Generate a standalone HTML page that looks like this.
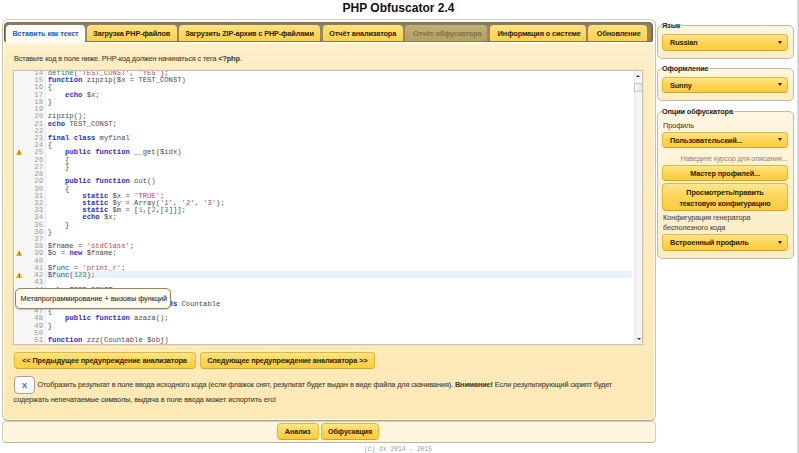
<!DOCTYPE html>
<html><head><meta charset="utf-8">
<style>
*{box-sizing:border-box;margin:0;padding:0}
html,body{width:799px;height:453px;overflow:hidden;background:#fff}
body{position:relative;font-family:"Liberation Sans",sans-serif;font-size:7.3px;letter-spacing:-0.12px;color:#443e30}
.abs{position:absolute}
#title{left:0;width:797px;top:1px;letter-spacing:0;text-align:center;font-weight:bold;font-size:12px;line-height:14px;color:#111}
#rline{left:797px;top:0;width:2px;height:453px;background:linear-gradient(90deg,#eceef3,#b9bdc9)}
#main{left:2px;top:19px;width:653.5px;height:402px;border:1px solid #d3cec0;border-left-color:#c9c2a6;border-right-color:#c9c2a6;border-bottom-color:#b2a684;box-shadow:inset 0 0 0 1px #fffbf0;border-radius:6px;background:linear-gradient(#fffaf0 0,#fffcf2 22.5px,#fdf0cc 24.5px,#fdedc3 45px,#fde9b6 100%)}
#tabbar{left:4px;top:22px;width:649px;height:20px;border-radius:5px 5px 3px 3px;background:linear-gradient(#7d7463 0,#918466 20%,#9a8a5e 80%,#8a7945 100%);box-shadow:inset 1px 0 #5f5646,inset -1.5px 0 #6a604c}
.tab{position:absolute;top:24.5px;height:16.5px;border-radius:4px 4px 0 0;background:linear-gradient(#fde27e,#fbd04a);font-weight:bold;color:#2e2200;text-align:center;line-height:17px;white-space:nowrap}
.tab.act{background:linear-gradient(#ffffff,#fffaf0);color:#1f60b5;height:17.5px}
.tab.dis{background:linear-gradient(#bfb072,#b1a163);color:#7f7148}
.th1{-webkit-text-stroke:0.1px currentColor}
#desc{left:14px;top:54px;line-height:10px;white-space:nowrap}
#editor{left:13px;top:69.5px;width:630px;height:275px;border:1px solid #cdc4a6;box-shadow:0 0 0 0.6px #e6dcc0;background:#fff;overflow:hidden}
#gutter{position:absolute;left:1px;top:0;width:31px;height:100%;background:#f6f6f6;border-right:1px solid #ececec}
#code{position:absolute;letter-spacing:0;left:0;top:-0.5px;width:620px;font-family:"Liberation Mono",monospace;font-size:7.2px;line-height:7.22px;white-space:pre;color:#4a4a4a}
.ln{display:inline-block;width:30px;text-align:right;color:#9a9a9a;padding-right:1px}
.sp{display:inline-block;width:3.8px}
.row{height:7.22px;position:relative}
.k{color:#2b2bd6;font-weight:bold}
.f{color:#0a7f8a}
.s{color:#c9404e}
.n{color:#2a9a60}
.hl:before{content:"";position:absolute;left:32px;right:2px;top:-1px;bottom:1px;background:#eaf2fd;z-index:-1}
.row{z-index:0}
.warn{position:absolute;left:2px;top:-0.5px;width:0;height:0;border-left:3px solid transparent;border-right:3px solid transparent;border-bottom:6px solid #eeb000}
.warn:after{content:"";position:absolute;left:-0.5px;top:2px;width:1px;height:3px;background:#7a5a00}
#sb{position:absolute;left:620px;top:0;width:8.5px;height:100%;background:linear-gradient(90deg,#ececec,#f7f7f7 40%,#f2f2f2)}
#sb .up{position:absolute;left:2.2px;top:4.5px;border-left:2px solid transparent;border-right:2px solid transparent;border-bottom:2.5px solid #333}
#sb .dn{position:absolute;left:2.5px;bottom:4px;border-left:2px solid transparent;border-right:2px solid transparent;border-top:2.5px solid #333}
#sb .th{position:absolute;left:0;top:12.5px;width:8.5px;height:8.5px;border:1px solid #c4c4c4;background:linear-gradient(90deg,#f8f8f8,#e2e2e2)}
.btn{position:absolute;border:1.2px solid #e2b834;border-bottom-color:#d4a52a;border-radius:4px;background:linear-gradient(#fde690,#fcd456 50%,#fbcc3e);font-weight:bold;color:#2e2200;text-align:center;white-space:nowrap}
#chk{left:13.5px;top:376px;width:21.5px;height:17.5px;border:1.2px solid #aaa18a;border-radius:4px;background:linear-gradient(#fff,#f3f6fb);color:#2b6db5;font-weight:bold;font-size:8px;text-align:center;line-height:18px}
#opt1{left:37.5px;top:380px;line-height:10px;white-space:nowrap;letter-spacing:-0.11px}
#opt2{left:13.5px;top:395px;line-height:10px;white-space:nowrap;letter-spacing:-0.08px}
#bottom{left:2px;top:421px;width:653.5px;height:22px;border:1px solid #d6cdb4;border-bottom-color:#c0b596;border-radius:4px;background:#fef5de}
#foot{left:364px;top:445.5px;letter-spacing:0;font-family:"Liberation Mono",monospace;font-size:6.3px;line-height:8px;color:#9a9a9a;white-space:pre}
.fs{position:absolute;left:657px;width:136.5px;border:1px solid #c6bb9c;border-radius:5px;background:linear-gradient(#fef6e2,#fdedc4)}
.lg{position:absolute;left:662px;font-weight:bold;color:#262218;line-height:9px;background:linear-gradient(transparent 45%,#fef5de 45%);padding-right:1px}
.sel{position:absolute;left:662px;width:126px;height:16.5px;border:1.2px solid #e2b834;border-bottom-color:#d4a52a;border-radius:4px;background:linear-gradient(#fde690,#fcd456 50%,#fbcc3e);font-weight:bold;color:#2e2200;line-height:15px;padding-left:7px;white-space:nowrap}
.sel:after{content:"";position:absolute;right:5.5px;top:5.5px;border-left:2.5px solid transparent;border-right:2.5px solid transparent;border-top:3px solid #2e2200}
.lbl{position:absolute;left:663px;color:#514a3b;letter-spacing:-0.07px;line-height:10px;white-space:nowrap}
#tip{letter-spacing:-0.02px;left:14.5px;top:288px;width:156px;height:20.5px;border:1.3px solid #8f8468;border-radius:5px;background:#fef9ea;color:#333;line-height:19px;padding-left:5px;white-space:nowrap;box-shadow:0 1px 1.5px rgba(60,50,20,0.25)}
</style></head><body>
<div id="title" class="abs">PHP Obfuscator 2.4</div>
<div id="rline" class="abs"></div>

<div id="main" class="abs"></div>
<div id="tabbar" class="abs"></div>
<div class="tab act" style="left:6px;width:79px">Вставить как текст</div>
<div class="tab" style="left:86.5px;width:90.5px">Загрузка PHP-файлов</div>
<div class="tab" style="left:179px;width:141px">Загрузить ZIP-архив с PHP-файлами</div>
<div class="tab" style="left:322.5px;width:80.5px">Отчёт анализатора</div>
<div class="tab dis" style="left:405px;width:82px;padding-left:2.5px">Отчёт обфускатора</div>
<div class="tab" style="left:489.5px;width:96.5px;padding-left:3px">Информация о системе</div>
<div class="tab" style="left:588px;width:59px;padding-left:2.5px">Обновление</div>

<div id="desc" class="abs th1">Вставьте код в поле ниже. PHP-код должен начинаться с тега <b>&lt;?php</b>.</div>

<div id="editor" class="abs">
<div id="gutter"></div>
<div id="code"><div class="row"><span class="ln">14</span><span class="sp"></span><span class="f">define</span>(<span class="s">'TEST_CONST'</span>, <span class="s">'YES'</span>);</div><div class="row"><span class="ln">15</span><span class="sp"></span><span class="k">function</span> zipzip($x = TEST_CONST)</div><div class="row"><span class="ln">16</span><span class="sp"></span>{</div><div class="row"><span class="ln">17</span><span class="sp"></span>    <span class="k">echo</span> $x;</div><div class="row"><span class="ln">18</span><span class="sp"></span>}</div><div class="row"><span class="ln">19</span><span class="sp"></span></div><div class="row"><span class="ln">20</span><span class="sp"></span>zipzip();</div><div class="row"><span class="ln">21</span><span class="sp"></span><span class="k">echo</span> TEST_CONST;</div><div class="row"><span class="ln">22</span><span class="sp"></span></div><div class="row"><span class="ln">23</span><span class="sp"></span><span class="k">final</span> <span class="k">class</span> myfinal</div><div class="row"><span class="ln">24</span><span class="sp"></span>{</div><div class="row"><i class="warn"></i><span class="ln">25</span><span class="sp"></span>    <span class="k">public</span> <span class="k">function</span> __get($idx)</div><div class="row"><span class="ln">26</span><span class="sp"></span>    {</div><div class="row"><span class="ln">27</span><span class="sp"></span>    }</div><div class="row"><span class="ln">28</span><span class="sp"></span></div><div class="row"><span class="ln">29</span><span class="sp"></span>    <span class="k">public</span> <span class="k">function</span> out()</div><div class="row"><span class="ln">30</span><span class="sp"></span>    {</div><div class="row"><span class="ln">31</span><span class="sp"></span>        <span class="k">static</span> $x = <span class="s">'TRUE'</span>;</div><div class="row"><span class="ln">32</span><span class="sp"></span>        <span class="k">static</span> $y = Array(<span class="s">'1'</span>, <span class="s">'2'</span>, <span class="s">'3'</span>);</div><div class="row"><span class="ln">33</span><span class="sp"></span>        <span class="k">static</span> $m = [<span class="n">1</span>,[<span class="n">2</span>,[<span class="n">3</span>]]];</div><div class="row"><span class="ln">34</span><span class="sp"></span>        <span class="k">echo</span> $x;</div><div class="row"><span class="ln">35</span><span class="sp"></span>    }</div><div class="row"><span class="ln">36</span><span class="sp"></span>}</div><div class="row"><span class="ln">37</span><span class="sp"></span></div><div class="row"><span class="ln">38</span><span class="sp"></span>$fname = <span class="s">'stdClass'</span>;</div><div class="row"><i class="warn"></i><span class="ln">39</span><span class="sp"></span>$o = <span class="k">new</span> $fname;</div><div class="row"><span class="ln">40</span><span class="sp"></span></div><div class="row"><span class="ln">41</span><span class="sp"></span>$func = <span class="s">'print_r'</span>;</div><div class="row hl"><i class="warn"></i><span class="ln">42</span><span class="sp"></span>$func(<span class="n">123</span>);</div><div class="row"><span class="ln">43</span><span class="sp"></span></div><div class="row"><span class="ln">44</span><span class="sp"></span><span class="k">echo</span> TEST_CONST;</div><div class="row"><span class="ln">45</span><span class="sp"></span></div><div class="row"><span class="ln">46</span><span class="sp"></span><span class="k">interface</span> my_interface <span class="k">extends</span> Countable</div><div class="row"><span class="ln">47</span><span class="sp"></span>{</div><div class="row"><span class="ln">48</span><span class="sp"></span>    <span class="k">public</span> <span class="k">function</span> azaza();</div><div class="row"><span class="ln">49</span><span class="sp"></span>}</div><div class="row"><span class="ln">50</span><span class="sp"></span></div><div class="row"><span class="ln">51</span><span class="sp"></span><span class="k">function</span> zzz(Countable $obj)</div><div class="row"><span class="ln">52</span><span class="sp"></span>{</div><div class="row"><span class="ln">53</span><span class="sp"></span>}</div></div>
<div id="sb"><i class="up"></i><i class="th"></i><i class="dn"></i></div>
</div>

<div id="tip" class="abs th1">Метапрограммирование + вызовы функций</div>

<div class="btn" style="left:13.5px;top:352px;width:182px;height:16.5px;line-height:15.5px">&lt;&lt; Предыдущее предупреждение анализатора</div>
<div class="btn" style="left:199.5px;top:352px;width:175.5px;height:16.5px;line-height:15.5px">Следующее предупреждение анализатора &gt;&gt;</div>
<div id="chk" class="abs">X</div>
<div id="opt1" class="abs th1">Отобразить результат в поле ввода исходного кода (если флажок снят, результат будет выдан в виде файла для скачивания). <b>Внимание!</b> Если результирующий скрипт будет</div>
<div id="opt2" class="abs th1">содержать непечатаемые символы, выдача в поле ввода может испортить его!</div>

<div id="bottom" class="abs"></div>
<div class="btn" style="left:277px;top:423px;width:41.5px;height:16.8px;line-height:15.5px">Анализ</div>
<div class="btn" style="left:321px;top:423px;width:58px;height:16.8px;line-height:15.5px">Обфускация</div>
<div id="foot" class="abs">(c) dx 2014 - 2015</div>

<div class="fs" style="top:25px;height:33.5px"></div>
<div class="lg" style="top:21px">Язык</div>
<div class="sel" style="top:34px">Russian</div>

<div class="fs" style="top:68px;height:33px"></div>
<div class="lg" style="top:64px">Оформление</div>
<div class="sel" style="top:76.5px">Sunny</div>

<div class="fs" style="top:110.5px;height:148px"></div>
<div class="lg" style="top:106.5px">Опции обфускатора</div>
<div class="lbl th1" style="top:121px">Профиль</div>
<div class="sel" style="top:131.5px">Пользовательский...</div>
<div class="lbl th1" style="top:154px;left:auto;right:11.5px;color:#9a927e;letter-spacing:-0.16px">Наведите курсор для описания...</div>
<div class="btn" style="left:662px;top:164.8px;width:126px;height:16.6px;line-height:15.5px">Мастер профилей...</div>
<div class="btn" style="left:662px;top:182.6px;width:126px;height:28px;line-height:10.4px;padding-top:4.5px">Просмотреть/править<br>текстовую конфигурацию</div>
<div class="lbl th1" style="top:213px">Конфигурация генератора<br>бесполезного кода</div>
<div class="sel" style="top:234px">Встроенный профиль</div>
</body></html>
